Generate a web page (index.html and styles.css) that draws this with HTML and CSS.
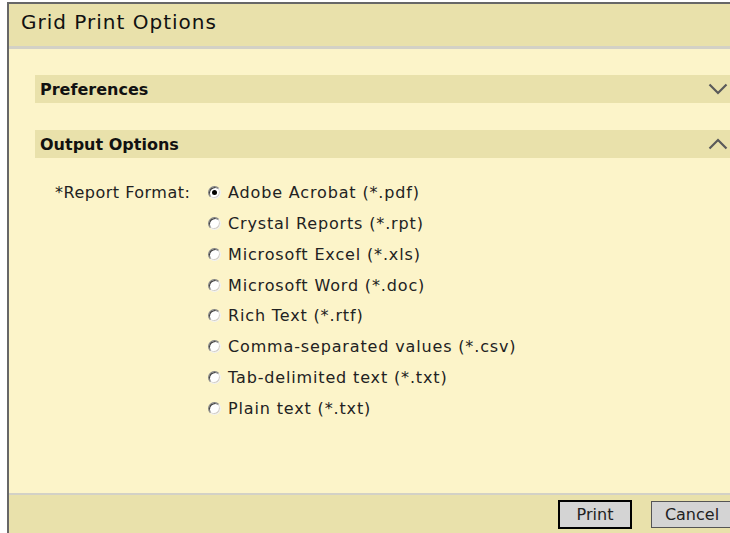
FILE: index.html
```html
<!DOCTYPE html>
<html>
<head>
<meta charset="utf-8">
<title>Grid Print Options</title>
<link rel="stylesheet" href="styles.css">
</head>
<body>
<div class="dialog">
  <div class="titlebar">Grid Print Options</div>
  <div class="content">
    <div class="section-bar">
      <span class="section-title">Preferences</span>
      <svg class="chevron" width="20" height="12" viewBox="0 0 20 12"><path d="M1.5 1.5 L10 10 L18.5 1.5" fill="none" stroke="#5a5a5a" stroke-width="2.2"/></svg>
    </div>
    <div class="section-bar">
      <span class="section-title">Output Options</span>
      <svg class="chevron" width="20" height="12" viewBox="0 0 20 12"><path d="M1.5 10.5 L10 2 L18.5 10.5" fill="none" stroke="#5a5a5a" stroke-width="2.2"/></svg>
    </div>
    <div class="form-row">
      <div class="field-label">*Report Format:</div>
      <div class="choices">
        <label class="choice"><input type="radio" name="fmt" checked><span>Adobe Acrobat (*.pdf)</span></label>
        <label class="choice"><input type="radio" name="fmt"><span>Crystal Reports (*.rpt)</span></label>
        <label class="choice"><input type="radio" name="fmt"><span>Microsoft Excel (*.xls)</span></label>
        <label class="choice"><input type="radio" name="fmt"><span>Microsoft Word (*.doc)</span></label>
        <label class="choice"><input type="radio" name="fmt"><span>Rich Text (*.rtf)</span></label>
        <label class="choice"><input type="radio" name="fmt"><span>Comma-separated values (*.csv)</span></label>
        <label class="choice"><input type="radio" name="fmt"><span>Tab-delimited text (*.txt)</span></label>
        <label class="choice"><input type="radio" name="fmt"><span>Plain text (*.txt)</span></label>
      </div>
    </div>
  </div>
  <div class="footer">
    <button class="btn btn-default">Print</button>
    <button class="btn btn-cancel">Cancel</button>
  </div>
</div>
</body>
</html>
```

FILE: styles.css
```css
html, body {
  margin: 0;
  padding: 0;
  background: #ffffff;
  overflow: hidden;
}

body {
  font-family: "DejaVu Sans", Verdana, sans-serif;
  color: #1a1a1a;
}

.dialog {
  margin: 2px 0 0 7px;
  width: 760px;
  height: 531px;
  box-sizing: border-box;
  border-left: 2px solid #676767;
  border-top: 2px solid #676767;
  display: flex;
  flex-direction: column;
}

.titlebar {
  height: 45px;
  flex: none;
  box-sizing: border-box;
  background: #e9e1ab;
  border-bottom: 3px solid #d3d1c6;
  padding: 6px 0 0 12px;
  font-size: 20px;
  letter-spacing: 1px;
  color: #111;
}

.content {
  flex: 1;
  background: #fcf4c9;
  padding: 26px 0 0 26px;
  display: flex;
  flex-direction: column;
}

.section-bar {
  height: 28px;
  flex: none;
  background: #e9e1ab;
  display: flex;
  align-items: center;
  justify-content: space-between;
  padding: 0 2px 0 5px;
  width: 695px;
  box-sizing: border-box;
}

.section-bar + .section-bar {
  margin-top: 27px;
}

.section-title {
  font-weight: bold;
  font-size: 16px;
  color: #111;
}

.chevron {
  display: block;
  margin-top: -1px;
}

.form-row {
  display: flex;
  margin-top: 19.5px;
  font-size: 16px;
  letter-spacing: 0.85px;
  color: #222;
}

.field-label {
  width: 153px;
  padding-left: 20px;
  line-height: 30.75px;
  letter-spacing: 0.5px;
}

.choices {
  display: flex;
  flex-direction: column;
}

.choice {
  display: flex;
  align-items: center;
  height: 30.75px;
}

.choice input {
  appearance: none;
  -webkit-appearance: none;
  width: 13px;
  height: 13px;
  margin: 0 7px 0 0;
  border-radius: 50%;
  box-sizing: border-box;
  border: 1px solid;
  border-color: #808080 #f0f0f0 #f0f0f0 #808080;
  background: #ffffff;
  box-shadow: inset 1px 1px 0 #404040, inset -1px -1px 0 #d4d0c8;
  position: relative;
}

.choice input:checked::after {
  content: "";
  position: absolute;
  left: 3px;
  top: 3px;
  width: 5px;
  height: 5px;
  border-radius: 50%;
  background: #000;
}

.footer {
  height: 40px;
  flex: none;
  box-sizing: border-box;
  background: #e9e1ab;
  border-top: 2px solid #d3d1c6;
  display: flex;
  align-items: center;
  padding-left: 550px;
  gap: 20px;
}

.btn {
  font-family: "DejaVu Sans", Verdana, sans-serif;
  font-size: 16px;
  color: #222;
  background: #d4d4d4;
  height: 27px;
  padding: 0;
  border: 1px solid #555;
  border-radius: 0;
}

.btn-default {
  width: 72px;
  border-color: #000;
  outline: 1px solid #000;
}

.btn-cancel {
  width: 82px;
}
```
